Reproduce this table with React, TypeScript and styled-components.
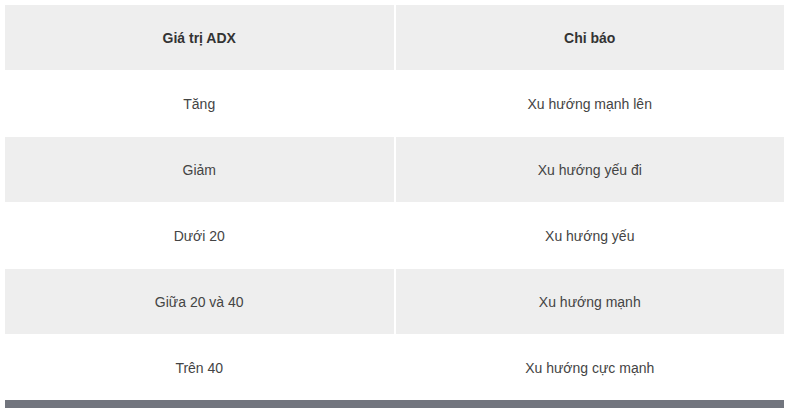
import React from "react";
import styled, { createGlobalStyle } from "styled-components";

const GlobalStyle = createGlobalStyle`
  body {
    margin: 0;
    background: #ffffff;
    font-family: "Liberation Sans", Arial, sans-serif;
  }
`;

const Page = styled.div`
  padding: 5px 6px 0 5px;
`;

const Table = styled.div`
  display: grid;
  grid-template-columns: 1fr 1fr;
  column-gap: 2px;
  row-gap: 1px;
  width: 779px;
  border-bottom: 8px solid #72757e;
`;

const Cell = styled.div<{ $shaded: boolean; $head?: boolean }>`
  height: 65px;
  display: flex;
  align-items: center;
  justify-content: center;
  background: ${(p) => (p.$shaded ? "#eeeeee" : "#ffffff")};
  color: ${(p) => (p.$head ? "#333333" : "#444444")};
  font-size: 14px;
  font-weight: ${(p) => (p.$head ? 700 : 400)};
`;

const rows = [
  ["Tăng", "Xu hướng mạnh lên"],
  ["Giảm", "Xu hướng yếu đi"],
  ["Dưới 20", "Xu hướng yếu"],
  ["Giữa 20 và 40", "Xu hướng mạnh"],
  ["Trên 40", "Xu hướng cực mạnh"],
];

const App = () => {
  return (
    <Page>
      <GlobalStyle />
      <Table>
        <Cell $shaded $head>Giá trị ADX</Cell>
        <Cell $shaded $head>Chỉ báo</Cell>
        {rows.map(([a, b], i) => (
          <React.Fragment key={a}>
            <Cell $shaded={i % 2 === 1}>{a}</Cell>
            <Cell $shaded={i % 2 === 1}>{b}</Cell>
          </React.Fragment>
        ))}
      </Table>
    </Page>
  );
};

export default App;
